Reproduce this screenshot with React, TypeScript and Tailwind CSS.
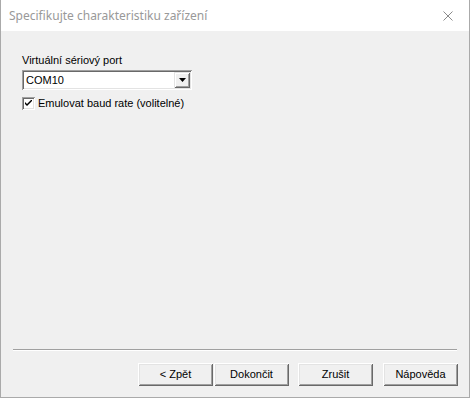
import React, { useState } from 'react';

const buttons = ['< Zpět', 'Dokončit', 'Zrušit', 'Nápověda'];

const Btn: React.FC<{ label: string; className?: string }> = ({ label, className = '' }) => (
  <button
    className={`w-[75px] h-[23px] bg-[#f0f0f0] text-[11px] text-black leading-none shadow-[inset_1px_1px_0_#ffffff,inset_-1px_-1px_0_#696969,inset_2px_2px_0_#e3e3e3,inset_-2px_-2px_0_#a0a0a0] ${className}`}
  >
    {label}
  </button>
);

export default function App() {
  const [checked, setChecked] = useState(true);

  return (
    <div className="w-[470px] h-[398px] flex flex-col bg-[#f0f0f0] border border-t-0 border-[#aaaaaa] font-['Liberation_Sans',Arial,sans-serif] overflow-hidden">
      {/* title bar */}
      <div className="h-[31px] shrink-0 bg-white flex items-center justify-between pl-[9px] pr-[17px] -mx-px">
        <span className="text-[12px] text-[#999999] font-['Noto_Sans',sans-serif]">
          Specifikujte charakteristiku zařízení
        </span>
        <svg width="10" height="10" viewBox="0 0 10 10" className="text-[#8a8a8a]">
          <path d="M0.5 0.5 L9.5 9.5 M9.5 0.5 L0.5 9.5" stroke="currentColor" strokeWidth="1" />
        </svg>
      </div>

      {/* body */}
      <div className="flex-1 flex flex-col pl-[21px] pt-[23px] text-[11px] text-black">
        <div className="leading-[13px]">Virtuální sériový port</div>

        <div className="mt-[3px] w-[170px] h-[20px] bg-white flex items-center shadow-[inset_1px_1px_0_#a0a0a0,inset_-1px_-1px_0_#ffffff,inset_2px_2px_0_#696969,inset_-2px_-2px_0_#e3e3e3]">
          <span className="pl-[4px] flex-1 leading-none">COM10</span>
          <div className="w-[16px] h-[16px] mr-[2px] bg-[#f0f0f0] flex items-center justify-center shadow-[inset_1px_1px_0_#e3e3e3,inset_-1px_-1px_0_#696969,inset_2px_2px_0_#ffffff,inset_-2px_-2px_0_#a0a0a0]">
            <svg width="7" height="4" viewBox="0 0 7 4">
              <path d="M0 0 H7 L3.5 4 Z" fill="#000" />
            </svg>
          </div>
        </div>

        <label className="mt-[7px] flex items-center gap-[3px] cursor-default" onClick={() => setChecked(!checked)}>
          <span className="w-[13px] h-[13px] bg-white flex items-center justify-center shadow-[inset_1px_1px_0_#a0a0a0,inset_-1px_-1px_0_#ffffff,inset_2px_2px_0_#696969,inset_-2px_-2px_0_#e3e3e3]">
            {checked && (
              <svg width="7" height="7" viewBox="0 0 7 7">
                <path d="M0 2 L0 4 L2 6 L7 1 L7 -1 L2 4 Z" fill="#000" />
              </svg>
            )}
          </span>
          <span className="leading-[13px]">Emulovat baud rate (volitelné)</span>
        </label>

        <div className="flex-1" />

        <div className="mr-[12px] -ml-[9px] h-[2px] border-t border-[#a0a0a0] border-b border-b-white" />

        <div className="flex justify-end pr-[11px] pt-[12px] pb-[11px]">
          <Btn label={buttons[0]} />
          <Btn label={buttons[1]} className="ml-[1px]" />
          <Btn label={buttons[2]} className="ml-[9px]" />
          <Btn label={buttons[3]} className="ml-[10px]" />
        </div>
      </div>
    </div>
  );
}
